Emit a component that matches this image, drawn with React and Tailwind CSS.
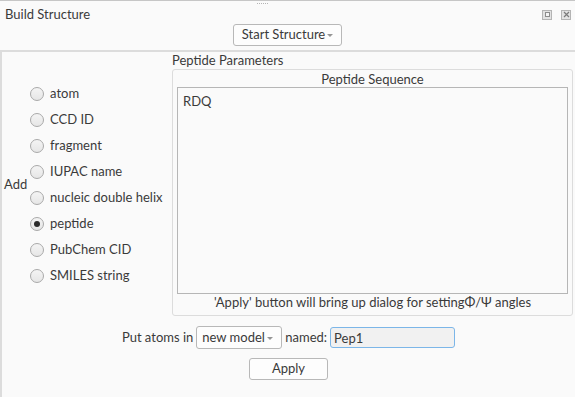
import React, { useState } from "react";

const OPTIONS = [
  "atom",
  "CCD ID",
  "fragment",
  "IUPAC name",
  "nucleic double helix",
  "peptide",
  "PubChem CID",
  "SMILES string",
];

function Radio({ label, checked, onSelect }) {
  return (
    <div className="flex items-center h-[26px] cursor-default" onClick={onSelect}>
      <span className="w-[14px] h-[14px] rounded-full border border-[#a9a9a9] bg-gradient-to-b from-[#f4f4f4] to-[#e6e6e6] flex items-center justify-center mr-[6px]">
        {checked && <span className="w-[6px] h-[6px] rounded-full bg-[#2b2b2b]" />}
      </span>
      <span>{label}</span>
    </div>
  );
}

function Arrow() {
  return (
    <svg width="6" height="3" viewBox="0 0 6 3" className="ml-[2px] mt-[1px]">
      <path d="M0 0 L6 0 L3 3 Z" fill="#959595" />
    </svg>
  );
}

export default function App() {
  const [choice, setChoice] = useState("peptide");
  const [seq, setSeq] = useState("RDQ");
  const [name, setName] = useState("Pep1");

  return (
    <div className="w-[575px] h-[397px] bg-[#fafafa] text-[#3a3a3a] text-[13px] font-['Lato',sans-serif] flex flex-col overflow-hidden relative">
      {/* top edge + drag handle */}
      <div className="h-px bg-[#c6c6c6]" />
      <div className="absolute top-[3px] left-[257px] flex gap-[1px]">
        {[0, 1, 2, 3, 4, 5].map((i) => (
          <span key={i} className="w-px h-px bg-[#b4b4b4]" />
        ))}
      </div>

      {/* title bar */}
      <div className="h-[23px] pt-[4px] pl-[5px] pr-[4px] flex items-center">
        <span className="flex-1">Build Structure</span>
        <span className="w-[10px] h-[10px] border border-[#b4b4b4] bg-[#e2e2e2] flex items-center justify-center mr-[9px]">
          <span className="w-[5px] h-[5px] border border-[#8c8c8c] bg-[#f4f4f4]" />
        </span>
        <span className="w-[10px] h-[10px] border border-[#b4b4b4] bg-[#e2e2e2] flex items-center justify-center">
          <svg width="7" height="7" viewBox="0 0 7 7">
            <path d="M1 1 L6 6 M6 1 L1 6" stroke="#7a7a7a" strokeWidth="1.2" />
          </svg>
        </span>
      </div>

      {/* start structure */}
      <div className="flex justify-center">
        <button className="w-[109px] h-[22px] border border-[#b8b8b8] rounded-[3px] bg-[#fdfdfd] flex items-center justify-center">
          Start Structure
          <Arrow />
        </button>
      </div>

      {/* main panel */}
      <div className="mt-[4px] flex-1 border-l-2 border-t-2 border-[#dcdcdc] flex flex-col">
        <div className="flex">
          <div className="w-[170px] pt-[2px] flex items-center">
            <span className="w-[28px] pl-[2px]">Add</span>
            <div className="flex flex-col">
              {OPTIONS.map((o) => (
                <Radio key={o} label={o} checked={choice === o} onSelect={() => setChoice(o)} />
              ))}
            </div>
          </div>

          <div className="flex flex-col w-[401px]">
            <div className="h-[17px] pt-[1px] flex items-center">Peptide Parameters</div>
            <div className="h-[247px] border border-[#dcdcdc] rounded-[3px] flex flex-col">
              <div className="h-[17px] pt-[3px] flex items-center justify-center">Peptide Sequence</div>
              <textarea
                value={seq}
                onChange={(e) => setSeq(e.target.value)}
                className="mx-[4px] h-[207px] border border-[#b6b6b6] bg-[#fafafa] px-[5px] py-[4px] resize-none outline-none"
              />
              <div className="h-[17px] pt-[1px] flex items-center justify-center">
                'Apply' button will bring up dialog for settingΦ/Ψ angles
              </div>
            </div>
          </div>
        </div>

        <div className="mt-[10px] h-[23px] flex items-center justify-center gap-[3px]">
          <span>Put atoms in</span>
          <button className="w-[86px] h-[23px] border border-[#b8b8b8] rounded-[3px] bg-[#fdfdfd] flex items-center pl-[5px]">
            new model
            <Arrow />
          </button>
          <span>named:</span>
          <input
            value={name}
            onChange={(e) => setName(e.target.value)}
            className="w-[125px] h-[21px] border border-[#7cb6e8] rounded-[3px] bg-[#f1f1f1] px-[3px] outline-none"
          />
        </div>

        <div className="mt-[9px] flex justify-center">
          <button className="w-[79px] h-[22px] border border-[#b8b8b8] rounded-[3px] bg-[#fdfdfd]">
            Apply
          </button>
        </div>
      </div>
    </div>
  );
}
